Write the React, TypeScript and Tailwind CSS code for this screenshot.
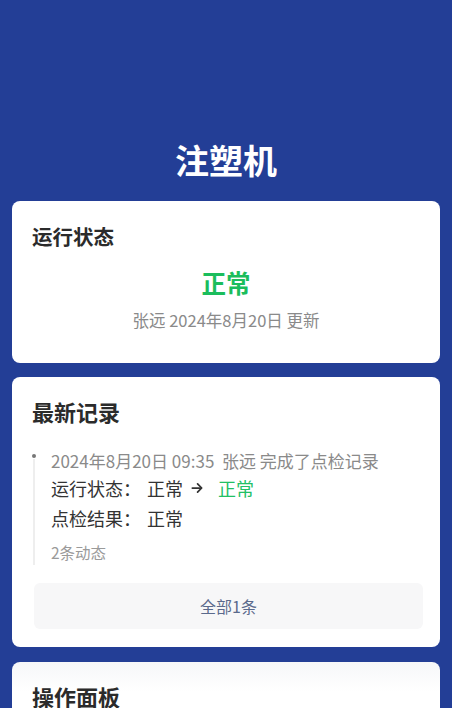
import React from "react";

const font = { fontFamily: '"Noto Sans CJK SC", "Noto Sans", sans-serif' };

export default function App() {
  return (
    <div style={font} className="min-h-screen bg-[#233e96] px-3 pt-[136px] pb-6">
      <h1 className="text-center text-[34px] leading-[48px] font-bold text-white mb-[17px]">注塑机</h1>

      <div className="bg-white rounded-lg px-5 pt-5 pb-[31px]">
        <div className="text-[20.5px] leading-[30px] font-bold text-[#2b2b2b]">运行状态</div>
        <div className="mt-[15px] text-center text-[24.5px] leading-[34px] font-bold text-[#1bbd5c]">正常</div>
        <div className="mt-[8px] text-center text-[16.5px] leading-[24px] text-[#8a8a8a]">张远 2024年8月20日 更新</div>
      </div>

      <div className="mt-[14px] bg-white rounded-lg px-5 pt-5 pb-[18px]">
        <div className="text-[22px] leading-[28px] font-bold text-[#2b2b2b]">最新记录</div>
        <div className="relative mt-[24px] pl-[19px]">
          <div className="absolute left-[1px] top-[10px] bottom-[-2px] w-[2px] bg-[#eeeeee]" />
          <div className="absolute left-0 top-[5px] w-[4px] h-[4px] rounded-full bg-[#777]" />
          <div className="text-[17px] leading-[24px] text-[#8a8a8a] whitespace-nowrap">
            2024年8月20日 09:35&nbsp;&nbsp;张远 完成了点检记录
          </div>
          <div className="flex items-center text-[18px] leading-[30px] text-[#333]">
            <span className="w-[96px]">运行状态：</span>
            <span>正常</span>
            <svg className="ml-[7px] mr-[14px]" width="14" height="14" viewBox="0 0 24 24" fill="none" stroke="#333" strokeWidth="3" strokeLinecap="round" strokeLinejoin="round">
              <path d="M4 12h15" />
              <path d="M13 5l7 7-7 7" />
            </svg>
            <span className="text-[#22c065]">正常</span>
          </div>
          <div className="flex items-center text-[18px] leading-[30px] text-[#333]">
            <span className="w-[96px]">点检结果：</span>
            <span>正常</span>
          </div>
          <div className="mt-[8px] text-[15.5px] leading-[22px] text-[#9a9a9a]">2条动态</div>
        </div>
        <div className="mt-[20px] ml-[2px] -mr-[3px] h-[46px] rounded-md bg-[#f7f7f8] flex items-center justify-center text-[16px] text-[#5b6a8c]">
          全部1条
        </div>
      </div>

      <div className="mt-[15px] rounded-lg bg-gradient-to-b from-[#f6f7f9] to-white to-[30px] px-5 pt-5 pb-5">
        <div className="text-[22px] leading-[28px] font-bold text-[#2b2b2b]">操作面板</div>
        <div className="h-[120px]" />
      </div>
    </div>
  );
}
